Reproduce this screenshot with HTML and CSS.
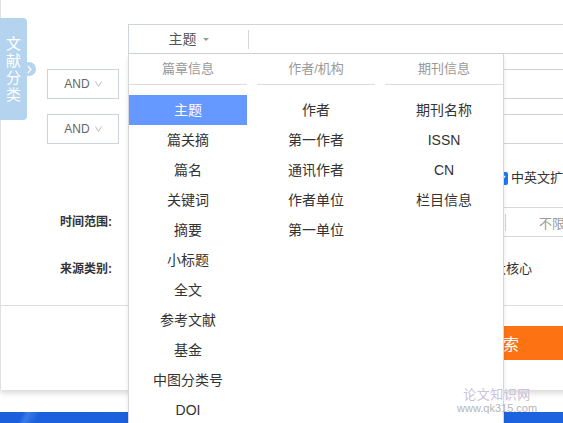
FILE: index.html
```html
<!DOCTYPE html>
<html lang="zh-CN">
<head>
<meta charset="utf-8">
<title>高级检索</title>
<link rel="stylesheet" href="styles.css">
</head>
<body>
<div class="page">
  <div class="panel">
    <div class="row row-search">
      <div class="lead"></div>
      <div class="search-box">
        <div class="field-select">主题<span class="caret"></span></div>
        <div class="sep"></div>
        <div class="search-input"></div>
      </div>
    </div>
    <div class="row row-and">
      <div class="lead lead-logic">
        <div class="logic">AND<svg class="chev" width="7" height="6" viewBox="0 0 7 6"><polyline points="0.5,0.5 3.5,5.5 6.5,0.5" fill="none" stroke="#bbb" stroke-width="1"/></svg></div>
      </div>
      <div class="text-box"></div>
    </div>
    <div class="row row-and">
      <div class="lead lead-logic">
        <div class="logic">AND<svg class="chev" width="7" height="6" viewBox="0 0 7 6"><polyline points="0.5,0.5 3.5,5.5 6.5,0.5" fill="none" stroke="#bbb" stroke-width="1"/></svg></div>
      </div>
      <div class="text-box"></div>
    </div>
    <div class="row row-check">
      <div class="lead"></div>
      <div class="check-area">
        <span class="checkbox"><svg width="13" height="13" viewBox="0 0 13 13"><polyline points="3,6.5 5.5,9 10,4" fill="none" stroke="#fff" stroke-width="1.6"/></svg></span>
        <span class="check-label">中英文扩展</span>
      </div>
    </div>
    <div class="row row-time">
      <div class="lead label">时间范围:</div>
      <div class="time-box">
        <div class="time-from"></div>
        <div class="time-to"><span class="time-sep"></span><span class="time-text">不限</span></div>
      </div>
    </div>
    <div class="row row-source">
      <div class="lead label">来源类别:</div>
      <div class="source-opts">北大核心</div>
    </div>
    <div class="divider"></div>
    <div class="actions"><button class="btn-search">检索</button></div>
  </div>
  <div class="bluebar"></div>

  <aside class="cat-tab">
    <div class="cat-text">文献分类</div>
    <span class="cat-knob"><svg width="5" height="9" viewBox="0 0 5 9"><polyline points="0.8,0.8 4,4.5 0.8,8.2" fill="none" stroke="#fff" stroke-width="1.2"/></svg></span>
  </aside>

  <div class="dropdown">
    <div class="dd-col">
      <div class="dd-head">篇章信息</div>
      <ul class="dd-list">
        <li class="active">主题</li>
        <li>篇关摘</li>
        <li>篇名</li>
        <li>关键词</li>
        <li>摘要</li>
        <li>小标题</li>
        <li>全文</li>
        <li>参考文献</li>
        <li>基金</li>
        <li>中图分类号</li>
        <li>DOI</li>
      </ul>
    </div>
    <div class="dd-col">
      <div class="dd-head">作者/机构</div>
      <ul class="dd-list">
        <li>作者</li>
        <li>第一作者</li>
        <li>通讯作者</li>
        <li>作者单位</li>
        <li>第一单位</li>
      </ul>
    </div>
    <div class="dd-col">
      <div class="dd-head">期刊信息</div>
      <ul class="dd-list">
        <li>期刊名称</li>
        <li>ISSN</li>
        <li>CN</li>
        <li>栏目信息</li>
      </ul>
    </div>
  </div>

  <div class="watermark">
    <div class="wm-title">论文知识网</div>
    <div class="wm-url">www.qk315.com</div>
  </div>
</div>
</body>
</html>
```

FILE: styles.css
```css
* { box-sizing: border-box; margin: 0; padding: 0; }
html, body { width: 563px; height: 423px; overflow: hidden; background: #fff; }
body { font-family: "Liberation Sans", "Noto Sans CJK SC", sans-serif; color: #333; }

.page { position: relative; width: 563px; height: 423px; overflow: hidden; }

.panel {
  width: 660px;
  height: 390px;
  padding-top: 24px;
  border-left: 1px solid #e0e0e0;
  background: #fff;
  box-shadow: 0 3px 6px rgba(0, 0, 0, 0.16);
}

.row { display: flex; }
.lead { width: 127px; flex: none; }

/* search bar */
.search-box {
  flex: 1;
  height: 30px;
  border: 1px solid #cfd4dc;
  display: flex;
  align-items: center;
}
.field-select {
  width: 119px;
  display: flex;
  align-items: center;
  justify-content: center;
  font-size: 14px;
  color: #555;
  line-height: 28px;
}
.caret {
  width: 0; height: 0;
  margin-left: 6px;
  border-left: 3px solid transparent;
  border-right: 3px solid transparent;
  border-top: 3px solid #999;
}
.sep { width: 1px; height: 19px; background: #d8d8d8; }
.search-input { flex: 1; }

/* AND rows */
.row-and { margin-top: 15px; }
.lead-logic { padding-left: 46px; }
.logic {
  width: 72px;
  height: 30px;
  border: 1px solid #cdd3dd;
  display: flex;
  align-items: center;
  justify-content: center;
  font-size: 12px;
  color: #666;
}
.chev { margin-left: 5px; }
.text-box { flex: 1; height: 30px; border: 1px solid #cfd4dc; }

/* checkbox row */
.row-check { margin-top: 24px; height: 20px; }
.check-area { display: flex; align-items: center; padding-left: 367px; }
.checkbox {
  width: 13px; height: 13px;
  border-radius: 2px;
  background: #1a7af2;
  display: flex;
}
.check-label { margin-left: 3px; font-size: 13px; line-height: 20px; color: #333; }

/* label rows */
.label {
  text-align: right;
  padding-right: 16px;
  font-size: 12px;
  font-weight: bold;
  color: #333;
}
.row-time { margin-top: 19px; }
.row-time .label { line-height: 30px; }
.time-box {
  flex: 1;
  height: 30px;
  border: 1px solid #d5d9e0;
  display: flex;
  align-items: center;
}
.time-from { width: 376px; height: 28px; }
.time-to { flex: 1; display: flex; align-items: center; }
.time-sep { width: 1px; height: 17px; background: #d8d8d8; }
.time-text { margin-left: 33px; font-size: 13px; color: #999; }

.row-source { margin-top: 22px; height: 20px; }
.row-source .label { line-height: 20px; }
.source-opts { padding-left: 352px; font-size: 13px; line-height: 20px; color: #333; }

.divider { margin-top: 26px; height: 1px; background: #dcdde2; }

.actions { margin-top: 20px; }
.btn-search {
  margin-left: 402px;
  width: 200px;
  height: 34px;
  border: none;
  background: #fd7313;
  color: #fff;
  font-family: "Noto Sans CJK SC", sans-serif;
  font-size: 16px;
}

.bluebar {
  margin-top: 22px;
  height: 20px;
  background: linear-gradient(115deg, #1b5fdc 0%, #1b5fdc 4%, #3a7ae6 5%, #1b5fdc 7%, #1d63df 100%);
}

/* left floating tab */
.cat-tab {
  position: absolute;
  left: 0;
  top: 18px;
  width: 27px;
  height: 102px;
  background: #b3d3ee;
  border-radius: 0 4px 4px 0;
  padding-top: 16px;
}
.cat-text {
  width: 15px;
  margin-left: 6px;
  font-family: "Noto Sans CJK SC", sans-serif;
  font-size: 15px;
  line-height: 17px;
  color: #fff;
}
.cat-knob {
  position: absolute;
  left: 22px;
  top: 44px;
  width: 14px;
  height: 14px;
  border-radius: 50%;
  background: #b3d3ee;
  display: flex;
  align-items: center;
  justify-content: center;
  padding-left: 1px;
}

/* dropdown */
.dropdown {
  position: absolute;
  left: 128px;
  top: 54px;
  width: 376px;
  height: 380px;
  background: #fff;
  border-left: 1px solid #d6d6d6;
  border-right: 1px solid #d6d6d6;
  box-shadow: 0 2px 4px rgba(0, 0, 0, 0.1);
  display: grid;
  grid-template-columns: repeat(3, 1fr);
  column-gap: 10px;
  align-items: start;
}
.dd-head {
  height: 31px;
  line-height: 30px;
  text-align: center;
  font-size: 13px;
  color: #999;
  border-bottom: 1px solid #dcdcdc;
}
.dd-list { list-style: none; padding-top: 10px; }
.dd-list li {
  height: 30px;
  line-height: 30px;
  text-align: center;
  font-size: 14px;
  color: #333;
}
.dd-list li.active { background: #6699ff; color: #fff; }

/* watermark */
.watermark {
  position: absolute;
  left: 457px;
  top: 385px;
  width: 80px;
  text-align: center;
  pointer-events: none;
}
.wm-title {
  font-family: "Noto Sans CJK SC", sans-serif;
  font-size: 13px;
  line-height: 17px;
  color: #cbc2d8;
  letter-spacing: 0.5px;
}
.wm-url {
  font-size: 11px;
  line-height: 13px;
  color: #b5b5b5;
}
```
